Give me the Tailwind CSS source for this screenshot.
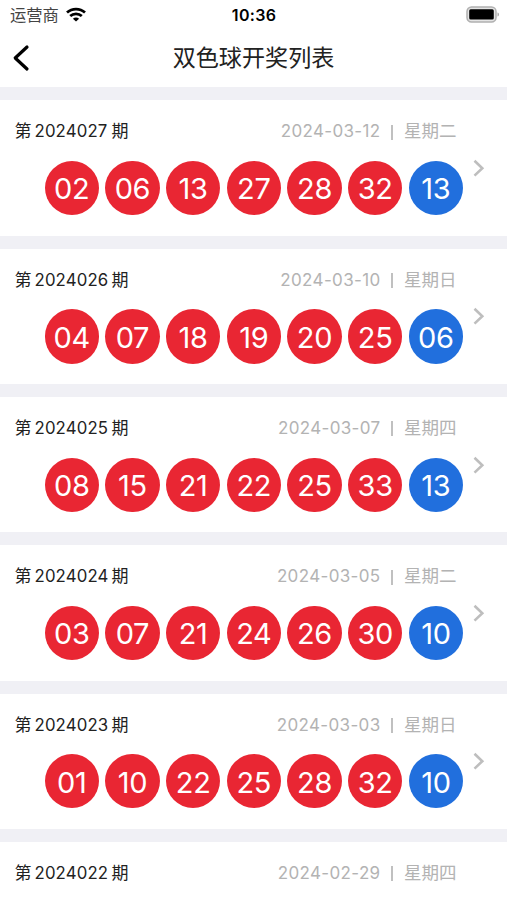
<!DOCTYPE html>
<html lang="zh-CN">
<head>
<meta charset="utf-8">
<title>双色球开奖列表</title>
<script src="https://cdn.jsdelivr.net/npm/@tailwindcss/browser@4"></script>
</head>
<body class="h-[900px] overflow-hidden bg-[#f0f0f5] font-['Inter','Noto_Sans_CJK_SC',sans-serif]">
<header class="h-[87px] bg-white">
  <div class="grid h-[30px] grid-cols-[1fr_auto_1fr] items-center pl-[10px] pr-[7px]">
    <div class="flex items-center gap-[7px] text-[16.300px] leading-[30px] text-[#444]">
      <span class="w-[49px] whitespace-nowrap">运营商</span>
      <svg class="mb-[2px] h-[15px] w-[20px]" viewBox="0 0 20 15" fill="none" stroke="#000" stroke-width="2.700"><path d="M1 5.600C6 .9 14 .9 19 5.600M4.200 9.100C7.500 6 12.500 6 15.800 9.100"/><path d="M6.900 11.700C8.600 10.200 11.400 10.200 13.100 11.700L10 14.600Z" fill="#000" stroke="none"/></svg>
    </div>
    <span class="-translate-x-px text-[16px] font-semibold leading-[30px] tracking-[0.300px] text-black">10:36</span>
    <svg class="mb-[2px] h-[17px] w-[34px] justify-self-end" viewBox="0 0 34 17"><rect x="1" y="1" width="29" height="15" rx="4.500" fill="#e4e4e4" stroke="#b0b0b0" stroke-width="1.500"/><rect x="3.200" y="3.200" width="24.600" height="10.200" rx="1.500" fill="#000"/><path d="M31.500 6.500C33.500 7 33.500 10 31.500 10.500Z" fill="#aaa"/></svg>
  </div>
  <div class="grid h-[57px] grid-cols-[40px_1fr_40px] items-center">
    <svg class="mb-[2px] ml-[12px] h-[28px] w-[19px]" viewBox="0 0 19 28" fill="none" stroke="#000" stroke-width="3.200" stroke-linecap="round" stroke-linejoin="round"><path d="M15 3L3.200 14L15 25"/></svg>
    <h1 class="text-center text-[23.100px] font-normal leading-[57px] text-[#222]">双色球开奖列表</h1>
  </div>
</header>
<main id="list" class="flex h-[813px] flex-col gap-[13px] overflow-hidden pt-[13.400px]"></main>
<template id="draw">
  <section class="h-[135.300px] shrink-0 bg-white pl-[14.500px] pt-[17px]">
    <div class="flex h-[28px] items-center justify-between pr-[50px] text-[17px] leading-[28px]">
      <div class="flex items-center gap-[3px] text-[#222]"><span>第</span><span data-issue class="w-[74px] whitespace-nowrap text-[16.800px] tracking-[0.150px]"></span><span>期</span></div>
      <div class="flex items-center text-[#b3b3b3]"><span data-date class="text-[17px] tracking-[0.350px]"></span><span class="ml-[10.500px] mt-[2px] h-[15px] w-[2px] bg-[#c0c0c0]"></span><span data-day class="ml-[11px] w-[53px] whitespace-nowrap text-[17.500px]"></span></div>
    </div>
    <div class="flex pl-[30.200px] pt-[15.700px]">
      <div data-balls class="flex gap-[6.500px]"></div>
      <svg class="ml-[10px] mt-[-2px] h-[18px] w-[12px]" viewBox="0 0 12 18" fill="none" stroke="#bebebe" stroke-width="2.600"><path d="M1.500 1.800L9.300 9.200L1.500 16.600"/></svg>
    </div>
  </section>
</template>
<script>
const draws = [
  ['2024027','2024-03-12','星期二','02 06 13 27 28 32 13'],
  ['2024026','2024-03-10','星期日','04 07 18 19 20 25 06'],
  ['2024025','2024-03-07','星期四','08 15 21 22 25 33 13'],
  ['2024024','2024-03-05','星期二','03 07 21 24 26 30 10'],
  ['2024023','2024-03-03','星期日','01 10 22 25 28 32 10'],
  ['2024022','2024-02-29','星期四','']
];
for (const [issue, date, day, balls] of draws) {
  const row = document.getElementById('draw').content.cloneNode(true);
  row.querySelector('[data-issue]').textContent = issue;
  row.querySelector('[data-date]').textContent = date;
  row.querySelector('[data-day]').textContent = day;
  balls.split(' ').filter(Boolean).forEach((n, i) => {
    const b = document.createElement('span');
    b.className = 'flex h-[54.200px] w-[54.200px] items-center justify-center rounded-full pt-[1.400px] text-[29px] font-normal leading-none tracking-[-0.300px] text-white ' + (i === 6 ? 'bg-[#216fdd]' : 'bg-[#e92633]');
    b.textContent = n;
    row.querySelector('[data-balls]').append(b);
  });
  document.getElementById('list').append(row);
}
</script>
</body>
</html>
